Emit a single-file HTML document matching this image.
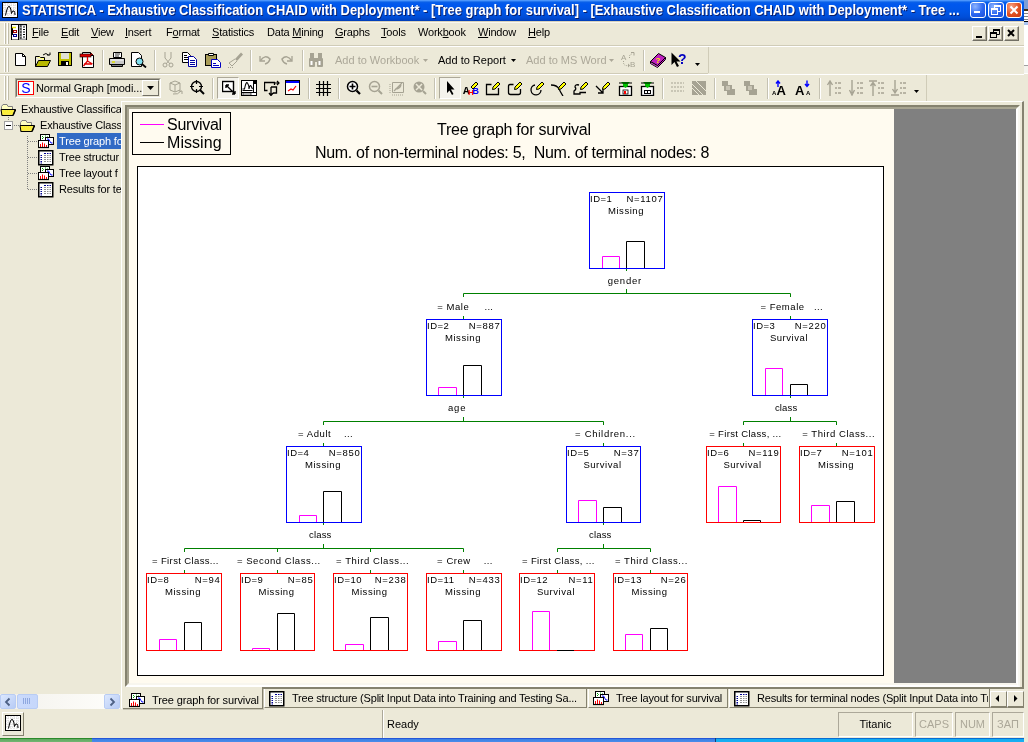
<!DOCTYPE html><html><head><meta charset="utf-8"><style>
*{margin:0;padding:0;box-sizing:border-box}
html,body{width:1028px;height:742px;overflow:hidden;background:#ECE9D8;font-family:"Liberation Sans", sans-serif;position:relative}
.a{position:absolute}
.t11{font-size:11px;line-height:13px;white-space:nowrap;color:#000}
#title{left:0;top:0;width:1024px;height:21px;background:linear-gradient(#5AA0FF 0px,#3A8AF8 1px,#0A60E8 2px,#0058EE 4px,#0055E5 12px,#004ED8 17px,#0043C4 20px,#003AB0 21px)}
#ttxt{left:22px;top:2px;font-size:14px;line-height:16px;font-weight:bold;color:#fff;text-shadow:1px 1px 0 #0A1E6A;white-space:nowrap;transform:scaleX(0.923);transform-origin:0 0}
.menu{top:26px;letter-spacing:-0.2px}
.u{text-decoration:underline}
.vsep{width:2px;border-left:1px solid #C5C2B2;border-right:1px solid #fff}
.grip{width:2px;border-left:1px solid #fff;border-right:1px solid #C1BDA9}
.gray{color:#ACA899}
.xpbtn{width:16px;height:16px;border:1px solid #fff;border-radius:3px}
.mdib{width:15px;height:15px;background:#ECE9D8;border-top:1px solid #fff;border-left:1px solid #fff;border-right:1px solid #716F64;border-bottom:1px solid #716F64;box-shadow:inset -1px -1px 0 #ACA899}
.tree{font-size:11px;line-height:13px;white-space:nowrap;letter-spacing:-0.15px}
.tab{top:689px;height:19px;border-left:1px solid #fff;border-right:1px solid #85826F;border-bottom:1px solid #85826F}
.sp{top:712px;height:25px;border-top:1px solid #ACA899;border-left:1px solid #ACA899;border-right:1px solid #fff;border-bottom:1px solid #fff}
</style></head><body><div id="root" class="a" style="left:0;top:0;width:1028px;height:742px;will-change:transform;overflow:hidden">
<div class="a" id="title"></div>
<svg class="a" style="left:2px;top:2px" width="16" height="16" viewBox="0 0 16 16"><rect x="0.5" y="0.5" width="15" height="15" fill="#fff" stroke="#000"/><path d="M3 1V15M6 1V15M9 1V15M12 1V15M1 3H15M1 6H15M1 9H15M1 12H15" stroke="#D0D0D0" stroke-width="1" stroke-dasharray="1 1"/><path d="M3.5 13.5Q5.5 3 7.5 4.5Q9 6 9.5 11.5Q10.5 8 12 9Q13 10 13 13" fill="none" stroke="#000" stroke-width="1"/></svg>
<div class="a" id="ttxt">STATISTICA - Exhaustive Classification CHAID with Deployment* - [Tree graph for survival] - [Exhaustive Classification CHAID with Deployment* - Tree ...</div>
<div class="a xpbtn" style="left:970px;top:2px;background:radial-gradient(circle at 30% 25%,#8CB4FF,#2A66F0 55%,#1E4FD8)"></div>
<div class="a" style="left:974px;top:11px;width:6px;height:2px;background:#fff"></div>
<div class="a xpbtn" style="left:988px;top:2px;background:radial-gradient(circle at 30% 25%,#8CB4FF,#2A66F0 55%,#1E4FD8)"></div>
<svg class="a" style="left:988px;top:2px" width="16" height="16"><path d="M6.5 6V3.5H12.5V9.5H10" fill="none" stroke="#fff"/><path d="M6 4H13" stroke="#fff" stroke-width="2"/><rect x="3.5" y="6.5" width="6" height="6" fill="none" stroke="#fff"/><path d="M3 7H10" stroke="#fff" stroke-width="2"/></svg>
<div class="a xpbtn" style="left:1006px;top:2px;background:radial-gradient(circle at 30% 25%,#F8A080,#E05020 55%,#C83A10)"></div>
<svg class="a" style="left:1006px;top:2px" width="16" height="16"><path d="M4.5 4.5L11.5 11.5M11.5 4.5L4.5 11.5" stroke="#fff" stroke-width="2"/></svg>
<div class="a" style="left:0;top:21px;width:1024px;height:1px;background:#D8D2BD"></div>
<div class="a" style="left:0;top:22px;width:1024px;height:1px;background:#F8F7F1"></div>
<div class="a" style="left:1024px;top:0;width:4px;height:10px;background:#7C9ED8"></div>
<div class="a" style="left:1024px;top:9px;width:4px;height:2px;background:#403010"></div>
<div class="a" style="left:1024px;top:11px;width:4px;height:10px;background:repeating-linear-gradient(#fff 0,#fff 2px,#808080 2px,#808080 3px)"></div>
<div class="a" style="left:1024px;top:21px;width:4px;height:1px;background:#000"></div>
<div class="a" style="left:1024px;top:22px;width:4px;height:3px;background:#A8C4F0"></div>
<div class="a" style="left:1024px;top:25px;width:4px;height:40px;background:#fff"></div>
<div class="a" style="left:1024px;top:65px;width:4px;height:1px;background:#A0A0A0"></div>
<div class="a" style="left:1024px;top:66px;width:4px;height:7px;background:#F4F3EE"></div>
<div class="a" style="left:1024px;top:73px;width:4px;height:1px;background:#fff"></div>
<div class="a grip" style="left:4px;top:23px;height:21px"></div><div class="a grip" style="left:7px;top:23px;height:21px"></div>
<svg class="a" style="left:11px;top:24px" width="16" height="16" viewBox="0 0 16 16"><rect x="0.5" y="0.5" width="15" height="15.5" fill="#fff" stroke="#000"/><path d="M7.5 1V16" stroke="#000"/><rect x="8" y="1" width="7" height="15" fill="#A0A0A0"/><path d="M1.5 3V11" stroke="#000"/><path d="M1 3.5H5" stroke="#E8E800" stroke-width="1.5"/><rect x="2.5" y="6.5" width="3" height="2" fill="none" stroke="#A00000"/><rect x="2.5" y="10.5" width="3" height="2" fill="none" stroke="#000090"/><path d="M9 2H10.5M9 5H10.5M9 8H10.5M9 11H10.5M9 14H10.5" stroke="#000"/><rect x="11" y="1.5" width="4" height="13" fill="#fff"/><path d="M12 3H14M12 5.5H14M12 8H14M12 10.5H14M12 13H14" stroke="#000"/></svg>
<div class="a t11 menu" style="left:32px"><span class="u">F</span>ile</div>
<div class="a t11 menu" style="left:61px"><span class="u">E</span>dit</div>
<div class="a t11 menu" style="left:91px"><span class="u">V</span>iew</div>
<div class="a t11 menu" style="left:125px"><span class="u">I</span>nsert</div>
<div class="a t11 menu" style="left:166px">F<span class="u">o</span>rmat</div>
<div class="a t11 menu" style="left:212px"><span class="u">S</span>tatistics</div>
<div class="a t11 menu" style="left:267px">Data <span class="u">M</span>ining</div>
<div class="a t11 menu" style="left:335px"><span class="u">G</span>raphs</div>
<div class="a t11 menu" style="left:381px"><span class="u">T</span>ools</div>
<div class="a t11 menu" style="left:418px">Work<span class="u">b</span>ook</div>
<div class="a t11 menu" style="left:478px"><span class="u">W</span>indow</div>
<div class="a t11 menu" style="left:528px"><span class="u">H</span>elp</div>
<div class="a mdib" style="left:972px;top:26px"></div>
<div class="a mdib" style="left:988px;top:26px"></div>
<div class="a mdib" style="left:1004px;top:26px"></div>
<div class="a" style="left:976px;top:36px;width:6px;height:2px;background:#000"></div>
<svg class="a" style="left:988px;top:26px" width="15" height="15"><path d="M5.5 6V3.5H11.5V8.5H9" fill="none" stroke="#000"/><path d="M5 4H12" stroke="#000" stroke-width="2"/><rect x="2.5" y="6.5" width="6" height="5" fill="none" stroke="#000"/><path d="M2 7H9" stroke="#000" stroke-width="2"/></svg>
<svg class="a" style="left:1004px;top:26px" width="15" height="15"><path d="M4 4L10 10M10 4L4 10" stroke="#000" stroke-width="2"/></svg>
<div class="a" style="left:0;top:45px;width:1024px;height:1px;background:#D0CCB8"></div>
<div class="a" style="left:0;top:46px;width:1024px;height:1px;background:#fff"></div>
<div class="a" style="left:0;top:73px;width:708px;height:1px;background:#D0CCB8"></div>
<div class="a" style="left:708px;top:47px;width:1px;height:26px;background:#D0CCB8"></div>
<div class="a" style="left:0;top:74px;width:1024px;height:1px;background:#fff"></div>
<div class="a grip" style="left:4px;top:48px;height:24px"></div><div class="a grip" style="left:7px;top:48px;height:24px"></div>
<svg class="a" style="left:14px;top:52px" width="16" height="16" viewBox="0 0 16 16"><path d="M1.5 1.5H8.5L11.5 4.5V13.5H1.5Z" fill="#fff" stroke="#000"/><path d="M8.5 1.5V4.5H11.5" fill="none" stroke="#000"/></svg>
<svg class="a" style="left:35px;top:52px" width="16" height="16" viewBox="0 0 16 16"><path d="M0.5 4.5H4.5L5.5 5.5H9.5V8.5" fill="#FFFF80" stroke="#000"/><path d="M0.5 4.5V14.5H12.5L15.5 8.5H3.5L0.5 14.5" fill="#B8B800" stroke="#000"/><path d="M8 3Q11 0 13.5 3" fill="none" stroke="#000"/><path d="M12 3H15V0.5" fill="none" stroke="#000"/></svg>
<svg class="a" style="left:58px;top:52px" width="16" height="16" viewBox="0 0 16 16"><rect x="0.5" y="0.5" width="13" height="13" fill="#C0C000" stroke="#000"/><rect x="3" y="1" width="8" height="6" fill="#E0E0D0"/><rect x="3" y="9" width="8" height="5" fill="#000"/><rect x="8" y="10" width="2" height="3" fill="#fff"/></svg>
<svg class="a" style="left:79px;top:52px" width="16" height="16" viewBox="0 0 16 16"><path d="M3.5 0.5H11.5L14.5 3.5V15.5H3.5Z" fill="#fff" stroke="#000"/><path d="M11.5 0.5V3.5H14.5" fill="#E00000" stroke="#000"/><rect x="1" y="2" width="11" height="3" fill="#E00000" stroke="#000" stroke-width="0.6"/><path d="M8.5 5V9M8.5 9L4.5 14M8.5 9L13.5 12M5 12H13" stroke="#E00000" stroke-width="1.3" fill="none"/></svg>
<svg class="a" style="left:109px;top:52px" width="16" height="16" viewBox="0 0 16 16"><path d="M4.5 0.5H12.5V5.5H4.5Z" fill="#fff" stroke="#000"/><path d="M6 2H11M6 4H10" stroke="#000" stroke-width="0.8"/><path d="M0.5 6.5H15.5V12.5H0.5Z" fill="#C8C8C8" stroke="#000"/><path d="M1.5 8H14.5" stroke="#fff"/><path d="M3 10H6" stroke="#E0E000" stroke-width="1.5"/><path d="M2.5 12.5H13.5V14.5H2.5Z" fill="#808080" stroke="#000"/></svg>
<svg class="a" style="left:131px;top:52px" width="16" height="16" viewBox="0 0 16 16"><path d="M0.5 0.5H7.5L10.5 3.5V14.5H0.5Z" fill="#fff" stroke="#000"/><circle cx="8.5" cy="9.5" r="3.5" fill="#80E0F0" stroke="#000"/><path d="M11 12L15 15.5" stroke="#000" stroke-width="1.8"/></svg>
<svg class="a" style="left:162px;top:52px" width="16" height="16" viewBox="0 0 16 16"><path d="M3 0V6L8 12M9 0V6L4 12" fill="none" stroke="#A6A393"/><circle cx="3" cy="13" r="2" fill="none" stroke="#A6A393"/><circle cx="9" cy="13" r="2" fill="none" stroke="#A6A393"/></svg>
<svg class="a" style="left:182px;top:52px" width="16" height="16" viewBox="0 0 16 16"><path d="M0.5 0.5H5.5L8.5 3.5V10.5H0.5Z" fill="#fff" stroke="#000"/><path d="M2 3.5H5M2 5.5H6M2 7.5H6" stroke="#000"/><path d="M6.5 4.5H11.5L14.5 7.5V14.5H6.5Z" fill="#fff" stroke="#0000A0"/><path d="M8 8.5H13M8 10.5H13M8 12.5H13" stroke="#0000A0"/></svg>
<svg class="a" style="left:205px;top:52px" width="16" height="16" viewBox="0 0 16 16"><rect x="0.5" y="2.5" width="11" height="11" fill="#A89C58" stroke="#000"/><path d="M3.5 3.5V1.5H8.5V3.5Z" fill="#fff" stroke="#000"/><path d="M6.5 7.5H12.5L15.5 10.5V15.5H6.5Z" fill="#fff" stroke="#0000C0"/><path d="M8 11.5H11M8 13.5H14" stroke="#0000C0"/></svg>
<svg class="a" style="left:227px;top:52px" width="16" height="16" viewBox="0 0 16 16"><path d="M14 0.5L16 2.5L10 9L8 7Z" fill="#A6A393"/><path d="M8 7L2 11L5 14L10 9" fill="none" stroke="#A6A393"/><path d="M1 15.5H6" stroke="#A6A393" stroke-dasharray="1 1"/></svg>
<svg class="a" style="left:257px;top:52px" width="16" height="16" viewBox="0 0 16 16"><path d="M3 4V9H8" fill="none" stroke="#A6A393" stroke-width="1.3"/><path d="M3.5 8.5Q8 2 13 7Q12 11 8 12" fill="none" stroke="#A6A393" stroke-width="1.5"/></svg>
<svg class="a" style="left:279px;top:52px" width="16" height="16" viewBox="0 0 16 16"><path d="M13 4V9H8" fill="none" stroke="#A6A393" stroke-width="1.3"/><path d="M12.5 8.5Q8 2 3 7Q4 11 8 12" fill="none" stroke="#A6A393" stroke-width="1.5"/></svg>
<svg class="a" style="left:308px;top:52px" width="16" height="16" viewBox="0 0 16 16"><rect x="1" y="6" width="6" height="9" rx="1" fill="#A6A393"/><rect x="9" y="6" width="6" height="9" rx="1" fill="#A6A393"/><rect x="2" y="1" width="4" height="6" fill="#A6A393"/><rect x="10" y="1" width="4" height="6" fill="#A6A393"/><rect x="6" y="6" width="4" height="4" fill="#A6A393"/><rect x="2.5" y="9" width="2" height="4" fill="#fff"/><rect x="10.5" y="9" width="2" height="4" fill="#fff"/></svg>
<svg class="a" style="left:620px;top:52px" width="16" height="16" viewBox="0 0 16 16"><text x="1" y="8" font-size="8" font-family="Liberation Sans" fill="#A6A393">A</text><text x="10" y="15" font-size="8" font-family="Liberation Sans" fill="#A6A393">B</text><path d="M3.5 9V11Q4 14 8 13.5" fill="none" stroke="#A6A393" stroke-dasharray="1 1"/><path d="M8 11.5L10 13.5L8 15.5Z" fill="#A6A393"/><path d="M9.5 6V4Q10 2 12 2" fill="none" stroke="#A6A393" stroke-dasharray="1 1"/><path d="M11 0.5H14V3.5" fill="none" stroke="#A6A393"/></svg>
<svg class="a" style="left:650px;top:52px" width="16" height="16" viewBox="0 0 16 16"><path d="M0.5 9.5L7.5 13.5L15.5 5.5V7.5L7.5 15.5L0.5 11.5Z" fill="#fff" stroke="#000"/><path d="M1 11L7.5 14.5L15 7" fill="none" stroke="#C020C0"/><path d="M0.5 9.5L8.5 1.5L15.5 5.5L7.5 13.5Z" fill="#C020C0" stroke="#000"/><text x="5.5" y="10.5" font-size="8" font-weight="bold" fill="#FFFF00" font-family="Liberation Sans">?</text></svg>
<svg class="a" style="left:671px;top:52px" width="16" height="16" viewBox="0 0 16 16"><path d="M0.5 0.5V13L3.5 10L6 15L8 14L5.5 9.5H9.5Z" fill="#000"/><text x="7" y="12" font-size="14" font-weight="bold" fill="#0000C0" font-family="Liberation Sans">?</text></svg>
<div class="a vsep" style="left:102px;top:50px;height:21px"></div>
<div class="a vsep" style="left:154px;top:50px;height:21px"></div>
<div class="a vsep" style="left:250px;top:50px;height:21px"></div>
<div class="a vsep" style="left:302px;top:50px;height:21px"></div>
<div class="a vsep" style="left:643px;top:50px;height:21px"></div>
<div class="a t11 gray" style="left:335px;top:54px">Add to Workbook</div>
<svg class="a" style="left:423px;top:59px" width="5" height="3"><path d="M0 0H5L2.5 3Z" fill="#ACA899"/></svg>
<div class="a t11" style="left:438px;top:54px">Add to Report</div>
<svg class="a" style="left:511px;top:59px" width="5" height="3"><path d="M0 0H5L2.5 3Z" fill="#000"/></svg>
<div class="a t11 gray" style="left:526px;top:54px">Add to MS Word</div>
<svg class="a" style="left:609px;top:59px" width="5" height="3"><path d="M0 0H5L2.5 3Z" fill="#ACA899"/></svg>
<svg class="a" style="left:695px;top:63px" width="5" height="3"><path d="M0 0H5L2.5 3Z" fill="#000"/></svg>
<div class="a" style="left:926px;top:75px;width:1px;height:26px;background:#D0CCB8"></div>
<div class="a grip" style="left:4px;top:76px;height:24px"></div><div class="a grip" style="left:7px;top:76px;height:24px"></div>
<div class="a" style="left:15px;top:78px;width:146px;height:20px;background:#fff;border:1px solid #7F9DB9;border-color:#ACA899 #fff #fff #ACA899"></div>
<div class="a" style="left:16px;top:79px;width:144px;height:18px;border:1px solid #716F64;border-right-color:#ECE9D8;border-bottom-color:#ECE9D8;background:#ECE9D8"></div>
<div class="a" style="left:18px;top:81px;width:16px;height:14px;border:1px solid #FF0000;background:#fff"></div>
<div class="a" style="left:18px;top:80px;width:16px;text-align:center;font-size:14px;line-height:16px;color:#0000FF">S</div>
<div class="a t11" style="left:36px;top:82px;letter-spacing:-0.1px">Normal Graph [modi...</div>
<div class="a" style="left:142px;top:80px;width:17px;height:16px;background:#ECE9D8;border-top:1px solid #fff;border-left:1px solid #fff;border-right:1px solid #716F64;border-bottom:1px solid #716F64"></div>
<svg class="a" style="left:147px;top:86px" width="7" height="4"><path d="M0 0H7L3.5 4Z" fill="#000"/></svg>
<div class="a" style="left:217px;top:77px;width:22px;height:22px;border-top:1px solid #ACA899;border-left:1px solid #ACA899;border-right:1px solid #fff;border-bottom:1px solid #fff;background:#F4F3EC"></div>
<div class="a" style="left:439px;top:77px;width:22px;height:22px;border-top:1px solid #ACA899;border-left:1px solid #ACA899;border-right:1px solid #fff;border-bottom:1px solid #fff;background:#F4F3EC"></div>
<svg class="a" style="left:168px;top:80px" width="16" height="16" viewBox="0 0 16 16"><path d="M2 3L7 1L12 3V10L7 12L2 10Z" fill="none" stroke="#A6A393"/><path d="M2 3L7 5L12 3M7 5V12" fill="none" stroke="#A6A393"/><path d="M5 14Q10 15 13 11" fill="none" stroke="#A6A393"/><path d="M11 11H14V14" fill="none" stroke="#A6A393"/></svg>
<svg class="a" style="left:190px;top:80px" width="16" height="16" viewBox="0 0 16 16"><circle cx="6.5" cy="6.5" r="5" fill="none" stroke="#000" stroke-width="1.3"/><path d="M6.5 0V4M6.5 9V13M0 6.5H4M9 6.5H13" stroke="#000" stroke-width="1.2"/><path d="M10 10L14 14" stroke="#000" stroke-width="2"/></svg>
<svg class="a" style="left:222px;top:80px" width="16" height="16" viewBox="0 0 16 16"><rect x="0.5" y="1.5" width="11" height="10" fill="#fff" stroke="#000" stroke-width="1.4"/><path d="M4 5L13 14M4 5H7M4 5V8M13 14H10M13 14V11" stroke="#000" stroke-width="1.4" fill="none"/></svg>
<svg class="a" style="left:241px;top:80px" width="16" height="16" viewBox="0 0 16 16"><rect x="0.5" y="0.5" width="15" height="15" fill="#fff" stroke="#000"/><path d="M12.5 1V12M1 12.5H15" stroke="#000"/><rect x="13" y="1" width="2" height="3" fill="#000"/><path d="M1.5 9L3.5 9Q5 1 6.5 3T8 9Q9 4 10 6L11.5 9" fill="none" stroke="#000" stroke-width="1.1"/><path d="M1.5 10.5H11.5" stroke="#000"/><rect x="2" y="13" width="8" height="2" fill="#fff" stroke="#000" stroke-width="0.6"/></svg>
<svg class="a" style="left:264px;top:80px" width="16" height="16" viewBox="0 0 16 16"><path d="M3.5 10.5H0.5V2.5H10.5V5" fill="none" stroke="#000" stroke-width="1.3"/><path d="M7 7V15M5 13L7 15.5L9 13M7 7H12.5V13H9" fill="none" stroke="#000" stroke-width="1.3"/><path d="M10 3H15M13 1L15 3L13 5" fill="none" stroke="#000" stroke-width="1.2"/></svg>
<svg class="a" style="left:285px;top:80px" width="16" height="16" viewBox="0 0 16 16"><rect x="0.5" y="0.5" width="14" height="14" fill="#fff" stroke="#000"/><rect x="1" y="1" width="13" height="2" fill="#0000FF"/><path d="M3 11L6 9L8 10L11 6" fill="none" stroke="#FF0000" stroke-width="1.2"/></svg>
<svg class="a" style="left:316px;top:80px" width="16" height="16" viewBox="0 0 16 16"><path d="M3.5 1V16M7.5 1V16M11.5 1V16M0 4.5H15M0 8.5H15M0 12.5H15" stroke="#000" stroke-width="1.2"/></svg>
<svg class="a" style="left:346px;top:80px" width="16" height="16" viewBox="0 0 16 16"><circle cx="6.5" cy="6.5" r="5" fill="#fff" stroke="#000" stroke-width="1.5"/><path d="M6.5 3.5V9.5M3.5 6.5H9.5" stroke="#000" stroke-width="1.6"/><path d="M10.5 10.5L14 14" stroke="#000" stroke-width="2.2"/></svg>
<svg class="a" style="left:368px;top:80px" width="16" height="16" viewBox="0 0 16 16"><circle cx="6.5" cy="6.5" r="5" fill="none" stroke="#A6A393" stroke-width="1.5"/><path d="M3.5 6.5H9.5" stroke="#A6A393" stroke-width="1.6"/><path d="M10.5 10.5L14 14" stroke="#A6A393" stroke-width="2"/></svg>
<svg class="a" style="left:389px;top:80px" width="16" height="16" viewBox="0 0 16 16"><path d="M3.5 2.5H14.5V12.5H3.5Z" fill="none" stroke="#A6A393"/><path d="M5 11L13 3M6 9Q11 9 12 5" fill="none" stroke="#A6A393" stroke-width="1.2"/><path d="M1 4V14M3 15H14" stroke="#A6A393" stroke-dasharray="1 1"/></svg>
<svg class="a" style="left:412px;top:80px" width="16" height="16" viewBox="0 0 16 16"><circle cx="7" cy="7" r="5.5" fill="#A6A393"/><path d="M4 4L10 10M10 4L4 10" stroke="#ECE9D8" stroke-width="1.5"/><path d="M11 11L14 14" stroke="#A6A393" stroke-width="2"/></svg>
<svg class="a" style="left:443px;top:80px" width="16" height="16" viewBox="0 0 16 16"><path d="M4 1V13L6.5 10.5L9 15L10.5 14L8 9.5H11.5Z" fill="#000"/></svg>
<svg class="a" style="left:463px;top:80px" width="16" height="16" viewBox="0 0 16 16"><text x="0" y="14" font-size="11" font-weight="bold" font-family="Liberation Mono" fill="#000">A</text><text x="5" y="15" font-size="8" font-weight="bold" font-family="Liberation Sans" fill="#FF0000">H</text><text x="9.5" y="14" font-size="9" font-weight="bold" font-family="Liberation Sans" fill="#0000FF">B</text><path d="M8 7L13 2L15 4L10 9Z" fill="#FFFF00" stroke="#000"/></svg>
<svg class="a" style="left:485px;top:80px" width="16" height="16" viewBox="0 0 16 16"><path d="M6.5 4.5H1.5V14.5H13.5V8" fill="none" stroke="#000" stroke-width="1.3"/><path d="M8 7L13 2L15 4L10 9L7.5 9.5Z" fill="#FFFF00" stroke="#000"/></svg>
<svg class="a" style="left:507px;top:80px" width="16" height="16" viewBox="0 0 16 16"><path d="M6.5 4.5H3Q1.5 4.5 1.5 6.5V12.5Q1.5 14.5 3.5 14.5H11.5Q13.5 14.5 13.5 12.5V9" fill="none" stroke="#000" stroke-width="1.3"/><path d="M8 7L13 2L15 4L10 9L7.5 9.5Z" fill="#FFFF00" stroke="#000"/></svg>
<svg class="a" style="left:529px;top:80px" width="16" height="16" viewBox="0 0 16 16"><path d="M6 5A5 5 0 1 0 12 10" fill="none" stroke="#000" stroke-width="1.3"/><path d="M8 7L13 2L15 4L10 9L7.5 9.5Z" fill="#FFFF00" stroke="#000"/></svg>
<svg class="a" style="left:551px;top:80px" width="16" height="16" viewBox="0 0 16 16"><path d="M0 5Q6 5 8 9T12 16" fill="none" stroke="#000" stroke-width="1.3"/><path d="M8 7L13 2L15 4L10 9L7.5 9.5Z" fill="#FFFF00" stroke="#000"/></svg>
<svg class="a" style="left:573px;top:80px" width="16" height="16" viewBox="0 0 16 16"><path d="M6 5Q2 4 2 7Q4 9 1 11V14H7V12.5H13" fill="none" stroke="#000" stroke-width="1.3"/><path d="M8 7L13 2L15 4L10 9L7.5 9.5Z" fill="#FFFF00" stroke="#000"/></svg>
<svg class="a" style="left:595px;top:80px" width="16" height="16" viewBox="0 0 16 16"><path d="M1 6L8 13M3 13H8V8" fill="none" stroke="#000" stroke-width="1.3"/><path d="M8 7L13 2L15 4L10 9L7.5 9.5Z" fill="#FFFF00" stroke="#000"/></svg>
<svg class="a" style="left:618px;top:80px" width="16" height="16" viewBox="0 0 16 16"><rect x="1.5" y="6.5" width="12" height="9" fill="#fff" stroke="#000" stroke-width="1.3"/><path d="M3 2H12L10 4V6L7.5 8L5 6V4Z" fill="#00C000"/><path d="M1 3H14" stroke="#000"/><rect x="5" y="10" width="5" height="4" fill="#fff" stroke="#000" stroke-width="0.8"/><rect x="6" y="11" width="2" height="3" fill="#FF0000"/></svg>
<svg class="a" style="left:640px;top:80px" width="16" height="16" viewBox="0 0 16 16"><rect x="1.5" y="6.5" width="12" height="9" fill="#fff" stroke="#000" stroke-width="1.3"/><path d="M3 2H12L10 4V6L7.5 8L5 6V4Z" fill="#00C000"/><path d="M1 3H14" stroke="#000"/><rect x="4" y="10" width="7" height="4" fill="#000"/><rect x="5" y="11" width="2" height="2" fill="#fff"/><rect x="8" y="11" width="2" height="2" fill="#fff"/></svg>
<svg class="a" style="left:670px;top:80px" width="16" height="16" viewBox="0 0 16 16"><path d="M1 3H14M1 7H14M1 11H14" stroke="#A6A393" stroke-dasharray="2 1"/></svg>
<svg class="a" style="left:691px;top:80px" width="16" height="16" viewBox="0 0 16 16"><rect x="1" y="1" width="14" height="14" fill="#A6A393"/><path d="M1 4L12 15M1 8L8 15M5 1L15 11" stroke="#ECE9D8" stroke-width="1"/></svg>
<svg class="a" style="left:721px;top:80px" width="16" height="16" viewBox="0 0 16 16"><path d="M1 1H7V5H11V9H14V15H6V11H3V6H1Z" fill="#A6A393"/><path d="M5 6H9V10H5Z" fill="#C8C4B4"/></svg>
<svg class="a" style="left:743px;top:80px" width="16" height="16" viewBox="0 0 16 16"><path d="M1 1H7V5H11V9H14V15H6V11H3V6H1Z" fill="#A6A393"/><path d="M5 6H9V10H5Z" fill="#C8C4B4"/></svg>
<svg class="a" style="left:772px;top:80px" width="16" height="16" viewBox="0 0 16 16"><text x="0" y="15" font-size="6" font-weight="bold" font-family="Liberation Sans" fill="#000">A</text><text x="4.5" y="15" font-size="13" font-weight="bold" font-family="Liberation Sans" fill="#000">A</text><path d="M6 1.5V7M4 3.5L6 1L8 3.5" fill="none" stroke="#0000FF" stroke-width="1.4"/></svg>
<svg class="a" style="left:795px;top:80px" width="16" height="16" viewBox="0 0 16 16"><text x="0" y="15" font-size="13" font-weight="bold" font-family="Liberation Sans" fill="#000">A</text><text x="11" y="15" font-size="6" font-weight="bold" font-family="Liberation Sans" fill="#000">A</text><path d="M12 0.5V6M10 4L12 6.5L14 4" fill="none" stroke="#0000FF" stroke-width="1.4"/></svg>
<svg class="a" style="left:826px;top:80px" width="16" height="16" viewBox="0 0 16 16"><path d="M4 16V2M1.5 5L4 1L6.5 5" fill="none" stroke="#A6A393" stroke-width="1.4"/><path d="M9 3H11M12 3H15M9 8H11M12 8H15M9 13H11M12 13H15" stroke="#A6A393" stroke-width="1.3"/></svg>
<svg class="a" style="left:848px;top:80px" width="16" height="16" viewBox="0 0 16 16"><path d="M4 0V13M1.5 10L4 15L6.5 10" fill="none" stroke="#A6A393" stroke-width="1.4"/><path d="M9 3H11M12 3H15M9 8H11M12 8H15M9 13H11M12 13H15" stroke="#A6A393" stroke-width="1.3"/></svg>
<svg class="a" style="left:869px;top:80px" width="16" height="16" viewBox="0 0 16 16"><path d="M0 1H8M4 16V3M1.5 6L4 2.5L6.5 6" fill="none" stroke="#A6A393" stroke-width="1.4"/><path d="M9 3H11M12 3H15M9 8H11M12 8H15M9 13H11M12 13H15" stroke="#A6A393" stroke-width="1.3"/></svg>
<svg class="a" style="left:891px;top:80px" width="16" height="16" viewBox="0 0 16 16"><path d="M0 15H8M4 0V12M1.5 9L4 13L6.5 9" fill="none" stroke="#A6A393" stroke-width="1.4"/><path d="M9 3H11M12 3H15M9 8H11M12 8H15M9 13H11M12 13H15" stroke="#A6A393" stroke-width="1.3"/></svg>
<div class="a vsep" style="left:212px;top:78px;height:21px"></div>
<div class="a vsep" style="left:308px;top:78px;height:21px"></div>
<div class="a vsep" style="left:338px;top:78px;height:21px"></div>
<div class="a vsep" style="left:434px;top:78px;height:21px"></div>
<div class="a vsep" style="left:662px;top:78px;height:21px"></div>
<div class="a vsep" style="left:714px;top:78px;height:21px"></div>
<div class="a vsep" style="left:767px;top:78px;height:21px"></div>
<div class="a vsep" style="left:819px;top:78px;height:21px"></div>
<svg class="a" style="left:914px;top:90px" width="5" height="3"><path d="M0 0H5L2.5 3Z" fill="#000"/></svg>
<svg class="a" style="left:0px;top:102px" width="16" height="16" viewBox="0 0 16 16"><path d="M1.5 4.5L3 2.5H7L8 4.5H12.5V13.5H1.5Z" fill="#FFFFC0" stroke="#808080"/><path d="M1 7.5H15.5L13 13.5H2Z" fill="#F8E850" stroke="#000"/><path d="M3 9H13M2.5 11H13" stroke="#FFFF00" stroke-dasharray="1 1"/><path d="M13 13.5L15.5 7.5" stroke="#000" stroke-width="1.5"/></svg>
<div class="a tree" style="left:21px;top:103px">Exhaustive Classifica</div>
<div class="a" style="left:4px;top:121px;width:9px;height:9px;border:1px solid #A0A0A0;background:#fff"></div>
<div class="a" style="left:6px;top:125px;width:5px;height:1px;background:#000"></div>
<svg class="a" style="left:19px;top:118px" width="16" height="16" viewBox="0 0 16 16"><path d="M1.5 4.5L3 2.5H7L8 4.5H12.5V13.5H1.5Z" fill="#FFFFC0" stroke="#808080"/><path d="M1 7.5H15.5L13 13.5H2Z" fill="#F8E850" stroke="#000"/><path d="M3 9H13M2.5 11H13" stroke="#FFFF00" stroke-dasharray="1 1"/><path d="M13 13.5L15.5 7.5" stroke="#000" stroke-width="1.5"/></svg>
<div class="a tree" style="left:40px;top:119px">Exhaustive Class</div>
<div class="a" style="left:57px;top:133px;width:64px;height:16px;background:#316AC5"></div>
<div class="a tree" style="left:59px;top:135px;color:#fff">Tree graph fo</div>
<div class="a tree" style="left:59px;top:151px">Tree structur</div>
<div class="a tree" style="left:59px;top:167px">Tree layout f</div>
<div class="a tree" style="left:59px;top:183px">Results for te</div>
<svg class="a" style="left:38px;top:134px" width="16" height="16" viewBox="0 0 16 16"><rect x="2.5" y="0.5" width="9" height="7" fill="#fff" stroke="#000"/><path d="M4 2L5.5 3.5L4 5" fill="none" stroke="#00A000"/><path d="M7 2H8M9 3H10" stroke="#00A000"/><rect x="7.5" y="3.5" width="8" height="7" fill="#fff" stroke="#000"/><path d="M9 5H10.5L12 7.5L13 9H14.5" fill="none" stroke="#0000FF"/><rect x="0.5" y="6.5" width="10" height="7" fill="#fff" stroke="#000"/><path d="M2.5 13V10M4.5 13V8.5M6.5 13V9.5M8.5 13V11" stroke="#FF0000"/><path d="M0 13.5H11" stroke="#000" stroke-width="1.2"/></svg>
<svg class="a" style="left:38px;top:150px" width="16" height="16" viewBox="0 0 16 16"><rect x="0.75" y="0.75" width="14" height="14" fill="#fff" stroke="#000" stroke-width="1.5"/><path d="M6 3.5H8M9 3.5H10.5M11.5 3.5H13" stroke="#000090" stroke-width="1"/><path d="M2.5 5.5H4M2.5 7.5H4M2.5 9.5H4M2.5 11.5H4M2.5 13H4" stroke="#000090" stroke-width="1"/><path d="M6 5.5H8M9 5.5H10.5M11.5 5.5H13M6 7.5H8M9 7.5H10.5M11.5 7.5H13M6 9.5H8M9 9.5H10.5M11.5 9.5H13M6 11.5H8M9 11.5H10.5M11.5 11.5H13" stroke="#909090" stroke-width="1"/></svg>
<svg class="a" style="left:38px;top:166px" width="16" height="16" viewBox="0 0 16 16"><rect x="2.5" y="0.5" width="9" height="7" fill="#fff" stroke="#000"/><path d="M4 2L5.5 3.5L4 5" fill="none" stroke="#00A000"/><path d="M7 2H8M9 3H10" stroke="#00A000"/><rect x="7.5" y="3.5" width="8" height="7" fill="#fff" stroke="#000"/><path d="M9 5H10.5L12 7.5L13 9H14.5" fill="none" stroke="#0000FF"/><rect x="0.5" y="6.5" width="10" height="7" fill="#fff" stroke="#000"/><path d="M2.5 13V10M4.5 13V8.5M6.5 13V9.5M8.5 13V11" stroke="#FF0000"/><path d="M0 13.5H11" stroke="#000" stroke-width="1.2"/></svg>
<svg class="a" style="left:38px;top:182px" width="16" height="16" viewBox="0 0 16 16"><rect x="0.75" y="0.75" width="14" height="14" fill="#fff" stroke="#000" stroke-width="1.5"/><path d="M6 3.5H8M9 3.5H10.5M11.5 3.5H13" stroke="#000090" stroke-width="1"/><path d="M2.5 5.5H4M2.5 7.5H4M2.5 9.5H4M2.5 11.5H4M2.5 13H4" stroke="#000090" stroke-width="1"/><path d="M6 5.5H8M9 5.5H10.5M11.5 5.5H13M6 7.5H8M9 7.5H10.5M11.5 7.5H13M6 9.5H8M9 9.5H10.5M11.5 9.5H13M6 11.5H8M9 11.5H10.5M11.5 11.5H13" stroke="#909090" stroke-width="1"/></svg>
<svg class="a" style="left:0;top:101px" width="60" height="100"><path d="M8.5 16V19M27.5 35V88M14 24.5H19M28 40.5H38M28 56.5H38M28 72.5H38M28 88.5H38" stroke="#808080" stroke-dasharray="1 1"/></svg>
<div class="a" style="left:121px;top:101px;width:903px;height:1px;background:#fff"></div>
<div class="a" style="left:121px;top:101px;width:903px;height:588px;border-top:1px solid #fff;border-left:1px solid #fff;border-right:2px solid #85826F;border-bottom:2px solid #85826F;background:#ECE9D8"></div>
<div class="a" style="left:125px;top:105px;width:895px;height:582px;border-top:2px solid #85826F;border-left:2px solid #85826F;border-right:2px solid #F8F7F0;border-bottom:2px solid #fff"></div>
<div class="a" style="left:127px;top:107px;width:891px;height:578px;border-top:2px solid #A8A592;border-left:2px solid #A8A592;border-right:2px solid #fff;border-bottom:2px solid #F8F6EE;background:#FFFBF0"></div>
<div class="a" style="left:894px;top:109px;width:122px;height:574px;background:#808080"></div>
<div class="a" style="left:137px;top:166px;width:747px;height:510px;border:1px solid #000;background:#fff"></div>
<div class="a" style="left:132px;top:112px;width:99px;height:43px;border:1px solid #000"></div>
<div class="a" style="left:140px;top:124px;width:24px;height:1px;background:#FF00FF"></div>
<div class="a" style="left:140px;top:142px;width:24px;height:1px;background:#000"></div>
<div class="a" style="left:167px;top:116px;font-size:16px;line-height:18px;white-space:nowrap;letter-spacing:-0.25px">Survival</div>
<div class="a" style="left:167px;top:134px;font-size:16px;line-height:18px;white-space:nowrap;letter-spacing:0.05px">Missing</div>
<div class="a" style="left:437px;top:121px;font-size:16px;line-height:18px;white-space:nowrap;letter-spacing:-0.25px">Tree graph for survival</div>
<div class="a" style="left:315px;top:144px;font-size:16px;line-height:18px;white-space:nowrap;letter-spacing:-0.31px">Num. of non-terminal nodes: 5,&nbsp; Num. of terminal nodes: 8</div>
<svg class="a" style="left:0;top:0" width="1028" height="742"><rect x="589.5" y="192.5" width="75" height="76" fill="#fff" stroke="#0000ff"/>
<path d="M602.5 268V256.5H619.5V268" fill="none" stroke="#ff00ff"/>
<path d="M626.5 268V241.5H644.5V268" fill="none" stroke="#000"/>
<text x="590" y="202" style="font-family:'Liberation Sans',sans-serif;font-size:9.5px;fill:#000;letter-spacing:0.5px">ID=1</text>
<text x="663.5" y="202" text-anchor="end" style="font-family:'Liberation Sans',sans-serif;font-size:9.5px;fill:#000;letter-spacing:0.7px">N=1107</text>
<text x="626.0" y="214" text-anchor="middle" style="font-family:'Liberation Sans',sans-serif;font-size:9.5px;fill:#000;letter-spacing:0.55px">Missing</text>
<path d="M626.5 269V271" stroke="#008000"/>
<text x="607.7" y="284" style="font-family:'Liberation Sans',sans-serif;font-size:9.5px;fill:#000;letter-spacing:0.8px">gender</text>
<path d="M626.5 289V293" stroke="#008000"/>
<path d="M463.5 297V293.5H790.5V297" fill="none" stroke="#008000"/>
<rect x="426.5" y="319.5" width="75" height="76" fill="#fff" stroke="#0000ff"/>
<path d="M438.5 395V387.5H456.5V395" fill="none" stroke="#ff00ff"/>
<path d="M463.5 395V365.5H481.5V395" fill="none" stroke="#000"/>
<text x="427" y="329" style="font-family:'Liberation Sans',sans-serif;font-size:9.5px;fill:#000;letter-spacing:0.5px">ID=2</text>
<text x="500.5" y="329" text-anchor="end" style="font-family:'Liberation Sans',sans-serif;font-size:9.5px;fill:#000;letter-spacing:0.7px">N=887</text>
<text x="463.0" y="341" text-anchor="middle" style="font-family:'Liberation Sans',sans-serif;font-size:9.5px;fill:#000;letter-spacing:0.55px">Missing</text>
<path d="M463.5 316V319" stroke="#008000"/>
<text x="437.2" y="310" style="font-family:'Liberation Sans',sans-serif;font-size:9.5px;fill:#000;letter-spacing:0.55px">= Male</text>
<text x="493.3" y="310" text-anchor="end" style="font-family:'Liberation Sans',sans-serif;font-size:9.5px;fill:#000;letter-spacing:0.3px">...</text>
<path d="M463.5 396V398" stroke="#008000"/>
<text x="447.9" y="411" style="font-family:'Liberation Sans',sans-serif;font-size:9.5px;fill:#000;letter-spacing:0.9px">age</text>
<path d="M463.5 417V421" stroke="#008000"/>
<path d="M323.5 425V421.5H603.5V425" fill="none" stroke="#008000"/>
<rect x="752.5" y="319.5" width="75" height="76" fill="#fff" stroke="#0000ff"/>
<path d="M765.5 395V368.5H782.5V395" fill="none" stroke="#ff00ff"/>
<path d="M790.5 395V384.5H807.5V395" fill="none" stroke="#000"/>
<text x="753" y="329" style="font-family:'Liberation Sans',sans-serif;font-size:9.5px;fill:#000;letter-spacing:0.5px">ID=3</text>
<text x="826.5" y="329" text-anchor="end" style="font-family:'Liberation Sans',sans-serif;font-size:9.5px;fill:#000;letter-spacing:0.7px">N=220</text>
<text x="789.0" y="341" text-anchor="middle" style="font-family:'Liberation Sans',sans-serif;font-size:9.5px;fill:#000;letter-spacing:0.55px">Survival</text>
<path d="M790.5 316V319" stroke="#008000"/>
<text x="760.4" y="310" style="font-family:'Liberation Sans',sans-serif;font-size:9.5px;fill:#000;letter-spacing:0.55px">= Female</text>
<text x="822.9" y="310" text-anchor="end" style="font-family:'Liberation Sans',sans-serif;font-size:9.5px;fill:#000;letter-spacing:0.3px">...</text>
<path d="M790.5 396V398" stroke="#008000"/>
<text x="774.9" y="411" style="font-family:'Liberation Sans',sans-serif;font-size:9.5px;fill:#000;letter-spacing:0.15px">class</text>
<path d="M790.5 417V421" stroke="#008000"/>
<path d="M743.5 425V421.5H836.5V425" fill="none" stroke="#008000"/>
<rect x="286.5" y="446.5" width="75" height="76" fill="#fff" stroke="#0000ff"/>
<path d="M299.5 522V515.5H316.5V522" fill="none" stroke="#ff00ff"/>
<path d="M323.5 522V491.5H341.5V522" fill="none" stroke="#000"/>
<text x="287" y="456" style="font-family:'Liberation Sans',sans-serif;font-size:9.5px;fill:#000;letter-spacing:0.5px">ID=4</text>
<text x="360.5" y="456" text-anchor="end" style="font-family:'Liberation Sans',sans-serif;font-size:9.5px;fill:#000;letter-spacing:0.7px">N=850</text>
<text x="323.0" y="468" text-anchor="middle" style="font-family:'Liberation Sans',sans-serif;font-size:9.5px;fill:#000;letter-spacing:0.55px">Missing</text>
<path d="M323.5 443V446" stroke="#008000"/>
<text x="298.09999999999997" y="437" style="font-family:'Liberation Sans',sans-serif;font-size:9.5px;fill:#000;letter-spacing:0.55px">= Adult</text>
<text x="352.90000000000003" y="437" text-anchor="end" style="font-family:'Liberation Sans',sans-serif;font-size:9.5px;fill:#000;letter-spacing:0.3px">...</text>
<path d="M323.5 523V525" stroke="#008000"/>
<text x="309.1" y="538" style="font-family:'Liberation Sans',sans-serif;font-size:9.5px;fill:#000;letter-spacing:0.15px">class</text>
<path d="M323.5 544V548" stroke="#008000"/>
<path d="M184.5 552V548.5H463.5V552" fill="none" stroke="#008000"/>
<path d="M277.5 548V552" stroke="#008000"/>
<path d="M370.5 548V552" stroke="#008000"/>
<rect x="566.5" y="446.5" width="74" height="76" fill="#fff" stroke="#0000ff"/>
<path d="M578.5 522V500.5H596.5V522" fill="none" stroke="#ff00ff"/>
<path d="M603.5 522V507.5H621.5V522" fill="none" stroke="#000"/>
<text x="567" y="456" style="font-family:'Liberation Sans',sans-serif;font-size:9.5px;fill:#000;letter-spacing:0.5px">ID=5</text>
<text x="639.5" y="456" text-anchor="end" style="font-family:'Liberation Sans',sans-serif;font-size:9.5px;fill:#000;letter-spacing:0.7px">N=37</text>
<text x="602.5" y="468" text-anchor="middle" style="font-family:'Liberation Sans',sans-serif;font-size:9.5px;fill:#000;letter-spacing:0.55px">Survival</text>
<path d="M603.5 443V446" stroke="#008000"/>
<text x="575.0" y="437" textLength="60.2" lengthAdjust="spacing" style="font-family:'Liberation Sans',sans-serif;font-size:9.5px;fill:#000">= Children...</text>
<path d="M603.5 523V525" stroke="#008000"/>
<text x="589.1" y="538" style="font-family:'Liberation Sans',sans-serif;font-size:9.5px;fill:#000;letter-spacing:0.15px">class</text>
<path d="M603.5 544V548" stroke="#008000"/>
<path d="M557.5 552V548.5H650.5V552" fill="none" stroke="#008000"/>
<rect x="706.5" y="446.5" width="74" height="76" fill="#fff" stroke="#ff0000"/>
<path d="M718.5 522V486.5H736.5V522" fill="none" stroke="#ff00ff"/>
<path d="M743.5 522V520.5H760.5V522" fill="none" stroke="#000"/>
<text x="707" y="456" style="font-family:'Liberation Sans',sans-serif;font-size:9.5px;fill:#000;letter-spacing:0.5px">ID=6</text>
<text x="779.5" y="456" text-anchor="end" style="font-family:'Liberation Sans',sans-serif;font-size:9.5px;fill:#000;letter-spacing:0.7px">N=119</text>
<text x="742.5" y="468" text-anchor="middle" style="font-family:'Liberation Sans',sans-serif;font-size:9.5px;fill:#000;letter-spacing:0.55px">Survival</text>
<path d="M743.5 443V446" stroke="#008000"/>
<text x="709.1999999999999" y="437" textLength="72.0" lengthAdjust="spacing" style="font-family:'Liberation Sans',sans-serif;font-size:9.5px;fill:#000">= First Class, ...</text>
<rect x="799.5" y="446.5" width="75" height="76" fill="#fff" stroke="#ff0000"/>
<path d="M811.5 522V505.5H829.5V522" fill="none" stroke="#ff00ff"/>
<path d="M836.5 522V501.5H854.5V522" fill="none" stroke="#000"/>
<text x="800" y="456" style="font-family:'Liberation Sans',sans-serif;font-size:9.5px;fill:#000;letter-spacing:0.5px">ID=7</text>
<text x="873.5" y="456" text-anchor="end" style="font-family:'Liberation Sans',sans-serif;font-size:9.5px;fill:#000;letter-spacing:0.7px">N=101</text>
<text x="836.0" y="468" text-anchor="middle" style="font-family:'Liberation Sans',sans-serif;font-size:9.5px;fill:#000;letter-spacing:0.55px">Missing</text>
<path d="M836.5 443V446" stroke="#008000"/>
<text x="802.1999999999999" y="437" textLength="72.4" lengthAdjust="spacing" style="font-family:'Liberation Sans',sans-serif;font-size:9.5px;fill:#000">= Third Class...</text>
<rect x="146.5" y="573.5" width="75" height="77" fill="#fff" stroke="#ff0000"/>
<path d="M159.5 650V639.5H176.5V650" fill="none" stroke="#ff00ff"/>
<path d="M184.5 650V622.5H201.5V650" fill="none" stroke="#000"/>
<text x="147" y="583" style="font-family:'Liberation Sans',sans-serif;font-size:9.5px;fill:#000;letter-spacing:0.5px">ID=8</text>
<text x="220.5" y="583" text-anchor="end" style="font-family:'Liberation Sans',sans-serif;font-size:9.5px;fill:#000;letter-spacing:0.7px">N=94</text>
<text x="183.0" y="595" text-anchor="middle" style="font-family:'Liberation Sans',sans-serif;font-size:9.5px;fill:#000;letter-spacing:0.55px">Missing</text>
<path d="M184.5 570V573" stroke="#008000"/>
<text x="152.0" y="564" textLength="66.5" lengthAdjust="spacing" style="font-family:'Liberation Sans',sans-serif;font-size:9.5px;fill:#000">= First Class...</text>
<rect x="240.5" y="573.5" width="74" height="77" fill="#fff" stroke="#ff0000"/>
<path d="M252.5 650V648.5H269.5V650" fill="none" stroke="#ff00ff"/>
<path d="M277.5 650V613.5H294.5V650" fill="none" stroke="#000"/>
<text x="241" y="583" style="font-family:'Liberation Sans',sans-serif;font-size:9.5px;fill:#000;letter-spacing:0.5px">ID=9</text>
<text x="313.5" y="583" text-anchor="end" style="font-family:'Liberation Sans',sans-serif;font-size:9.5px;fill:#000;letter-spacing:0.7px">N=85</text>
<text x="276.5" y="595" text-anchor="middle" style="font-family:'Liberation Sans',sans-serif;font-size:9.5px;fill:#000;letter-spacing:0.55px">Missing</text>
<path d="M277.5 570V573" stroke="#008000"/>
<text x="237.0" y="564" textLength="83.2" lengthAdjust="spacing" style="font-family:'Liberation Sans',sans-serif;font-size:9.5px;fill:#000">= Second Class...</text>
<rect x="333.5" y="573.5" width="74" height="77" fill="#fff" stroke="#ff0000"/>
<path d="M345.5 650V644.5H363.5V650" fill="none" stroke="#ff00ff"/>
<path d="M370.5 650V617.5H388.5V650" fill="none" stroke="#000"/>
<text x="334" y="583" style="font-family:'Liberation Sans',sans-serif;font-size:9.5px;fill:#000;letter-spacing:0.5px">ID=10</text>
<text x="406.5" y="583" text-anchor="end" style="font-family:'Liberation Sans',sans-serif;font-size:9.5px;fill:#000;letter-spacing:0.7px">N=238</text>
<text x="369.5" y="595" text-anchor="middle" style="font-family:'Liberation Sans',sans-serif;font-size:9.5px;fill:#000;letter-spacing:0.55px">Missing</text>
<path d="M370.5 570V573" stroke="#008000"/>
<text x="336.0" y="564" textLength="72.7" lengthAdjust="spacing" style="font-family:'Liberation Sans',sans-serif;font-size:9.5px;fill:#000">= Third Class...</text>
<rect x="426.5" y="573.5" width="75" height="77" fill="#fff" stroke="#ff0000"/>
<path d="M438.5 650V641.5H456.5V650" fill="none" stroke="#ff00ff"/>
<path d="M463.5 650V620.5H481.5V650" fill="none" stroke="#000"/>
<text x="427" y="583" style="font-family:'Liberation Sans',sans-serif;font-size:9.5px;fill:#000;letter-spacing:0.5px">ID=11</text>
<text x="500.5" y="583" text-anchor="end" style="font-family:'Liberation Sans',sans-serif;font-size:9.5px;fill:#000;letter-spacing:0.7px">N=433</text>
<text x="463.0" y="595" text-anchor="middle" style="font-family:'Liberation Sans',sans-serif;font-size:9.5px;fill:#000;letter-spacing:0.55px">Missing</text>
<path d="M463.5 570V573" stroke="#008000"/>
<text x="437.09999999999997" y="564" style="font-family:'Liberation Sans',sans-serif;font-size:9.5px;fill:#000;letter-spacing:0.55px">= Crew</text>
<text x="492.7" y="564" text-anchor="end" style="font-family:'Liberation Sans',sans-serif;font-size:9.5px;fill:#000;letter-spacing:0.3px">...</text>
<rect x="519.5" y="573.5" width="75" height="77" fill="#fff" stroke="#ff0000"/>
<path d="M532.5 650V611.5H549.5V650" fill="none" stroke="#ff00ff"/>
<path d="M557 650.5H574" fill="none" stroke="#000"/>
<text x="520" y="583" style="font-family:'Liberation Sans',sans-serif;font-size:9.5px;fill:#000;letter-spacing:0.5px">ID=12</text>
<text x="593.5" y="583" text-anchor="end" style="font-family:'Liberation Sans',sans-serif;font-size:9.5px;fill:#000;letter-spacing:0.7px">N=11</text>
<text x="556.0" y="595" text-anchor="middle" style="font-family:'Liberation Sans',sans-serif;font-size:9.5px;fill:#000;letter-spacing:0.55px">Survival</text>
<path d="M557.5 570V573" stroke="#008000"/>
<text x="522.0" y="564" textLength="72.4" lengthAdjust="spacing" style="font-family:'Liberation Sans',sans-serif;font-size:9.5px;fill:#000">= First Class, ...</text>
<rect x="613.5" y="573.5" width="74" height="77" fill="#fff" stroke="#ff0000"/>
<path d="M625.5 650V634.5H642.5V650" fill="none" stroke="#ff00ff"/>
<path d="M650.5 650V628.5H667.5V650" fill="none" stroke="#000"/>
<text x="614" y="583" style="font-family:'Liberation Sans',sans-serif;font-size:9.5px;fill:#000;letter-spacing:0.5px">ID=13</text>
<text x="686.5" y="583" text-anchor="end" style="font-family:'Liberation Sans',sans-serif;font-size:9.5px;fill:#000;letter-spacing:0.7px">N=26</text>
<text x="649.5" y="595" text-anchor="middle" style="font-family:'Liberation Sans',sans-serif;font-size:9.5px;fill:#000;letter-spacing:0.55px">Missing</text>
<path d="M650.5 570V573" stroke="#008000"/>
<text x="614.9" y="564" textLength="72.5" lengthAdjust="spacing" style="font-family:'Liberation Sans',sans-serif;font-size:9.5px;fill:#000">= Third Class...</text></svg>
<div class="a" style="left:0;top:694px;width:120px;height:15px;background:linear-gradient(90deg,#F3F1EC,#FEFEFB)"></div>
<div class="a" style="left:0px;top:694px;width:16px;height:15px;border:1px solid #B8CCF4;border-radius:2px;background:linear-gradient(135deg,#DCE8FE,#B7CBF5)"></div>
<div class="a" style="left:104px;top:694px;width:16px;height:15px;border:1px solid #B8CCF4;border-radius:2px;background:linear-gradient(135deg,#DCE8FE,#B7CBF5)"></div>
<svg class="a" style="left:0;top:694px" width="16" height="16"><path d="M9.5 4.5L6 8L9.5 11.5" fill="none" stroke="#4D6185" stroke-width="1.8"/></svg>
<svg class="a" style="left:104px;top:694px" width="16" height="16"><path d="M6.5 4.5L10 8L6.5 11.5" fill="none" stroke="#4D6185" stroke-width="1.8"/></svg>
<div class="a" style="left:17px;top:694px;width:21px;height:15px;border:1px solid #B8CCF4;border-radius:2px;background:linear-gradient(90deg,#CADAFC,#C6D7FB)"></div>
<svg class="a" style="left:23px;top:698px" width="9" height="6"><path d="M0.5 0V6M2.5 0V6M4.5 0V6M6.5 0V6" stroke="#8FA8DF"/></svg>
<div class="a" style="left:122px;top:687px;width:141px;height:2px;background:#ECE9D8"></div>
<div class="a" style="left:121px;top:687px;width:1px;height:22px;background:#fff"></div>
<div class="a" style="left:123px;top:708px;width:141px;height:1px;background:#85826F"></div>
<div class="a" style="left:123px;top:709px;width:141px;height:1px;background:#C8C5B4"></div>
<div class="a" style="left:262px;top:687px;width:1px;height:22px;background:#85826F"></div>
<div class="a" style="left:263px;top:689px;width:1px;height:20px;background:#C8C5B4"></div>
<svg class="a" style="left:129px;top:693px" width="16" height="16" viewBox="0 0 16 16"><rect x="2.5" y="0.5" width="9" height="7" fill="#fff" stroke="#000"/><path d="M4 2L5.5 3.5L4 5" fill="none" stroke="#00A000"/><path d="M7 2H8M9 3H10" stroke="#00A000"/><rect x="7.5" y="3.5" width="8" height="7" fill="#fff" stroke="#000"/><path d="M9 5H10.5L12 7.5L13 9H14.5" fill="none" stroke="#0000FF"/><rect x="0.5" y="6.5" width="10" height="7" fill="#fff" stroke="#000"/><path d="M2.5 13V10M4.5 13V8.5M6.5 13V9.5M8.5 13V11" stroke="#FF0000"/><path d="M0 13.5H11" stroke="#000" stroke-width="1.2"/></svg>
<div class="a t11" style="left:152px;top:694px;letter-spacing:-0.12px">Tree graph for survival</div>
<div class="a tab" style="left:264px;width:323px;background:#ECE9D8"></div>
<svg class="a" style="left:269px;top:691px" width="16" height="16" viewBox="0 0 16 16"><rect x="0.75" y="0.75" width="14" height="14" fill="#fff" stroke="#000" stroke-width="1.5"/><path d="M6 3.5H8M9 3.5H10.5M11.5 3.5H13" stroke="#000090" stroke-width="1"/><path d="M2.5 5.5H4M2.5 7.5H4M2.5 9.5H4M2.5 11.5H4M2.5 13H4" stroke="#000090" stroke-width="1"/><path d="M6 5.5H8M9 5.5H10.5M11.5 5.5H13M6 7.5H8M9 7.5H10.5M11.5 7.5H13M6 9.5H8M9 9.5H10.5M11.5 9.5H13M6 11.5H8M9 11.5H10.5M11.5 11.5H13" stroke="#909090" stroke-width="1"/></svg>
<div class="a t11" style="left:292px;top:692px;width:293px;overflow:hidden;letter-spacing:-0.2px">Tree structure (Split Input Data into Training and Testing Sa...</div>
<div class="a tab" style="left:588px;width:140px;background:#ECE9D8"></div>
<svg class="a" style="left:593px;top:691px" width="16" height="16" viewBox="0 0 16 16"><rect x="2.5" y="0.5" width="9" height="7" fill="#fff" stroke="#000"/><path d="M4 2L5.5 3.5L4 5" fill="none" stroke="#00A000"/><path d="M7 2H8M9 3H10" stroke="#00A000"/><rect x="7.5" y="3.5" width="8" height="7" fill="#fff" stroke="#000"/><path d="M9 5H10.5L12 7.5L13 9H14.5" fill="none" stroke="#0000FF"/><rect x="0.5" y="6.5" width="10" height="7" fill="#fff" stroke="#000"/><path d="M2.5 13V10M4.5 13V8.5M6.5 13V9.5M8.5 13V11" stroke="#FF0000"/><path d="M0 13.5H11" stroke="#000" stroke-width="1.2"/></svg>
<div class="a t11" style="left:616px;top:692px;width:110px;overflow:hidden;letter-spacing:-0.2px">Tree layout for survival</div>
<div class="a tab" style="left:729px;width:261px;background:#ECE9D8"></div>
<svg class="a" style="left:734px;top:691px" width="16" height="16" viewBox="0 0 16 16"><rect x="0.75" y="0.75" width="14" height="14" fill="#fff" stroke="#000" stroke-width="1.5"/><path d="M6 3.5H8M9 3.5H10.5M11.5 3.5H13" stroke="#000090" stroke-width="1"/><path d="M2.5 5.5H4M2.5 7.5H4M2.5 9.5H4M2.5 11.5H4M2.5 13H4" stroke="#000090" stroke-width="1"/><path d="M6 5.5H8M9 5.5H10.5M11.5 5.5H13M6 7.5H8M9 7.5H10.5M11.5 7.5H13M6 9.5H8M9 9.5H10.5M11.5 9.5H13M6 11.5H8M9 11.5H10.5M11.5 11.5H13" stroke="#909090" stroke-width="1"/></svg>
<div class="a t11" style="left:757px;top:692px;width:231px;overflow:hidden;letter-spacing:-0.2px">Results for terminal nodes (Split Input Data into Tr</div>
<div class="a" style="left:990px;top:691px;width:17px;height:17px;border-left:1px solid #fff;border-top:1px solid #fff;border-right:1px solid #85826F;border-bottom:2px solid #85826F;background:#ECE9D8"></div>
<svg class="a" style="left:990px;top:691px" width="16" height="16"><path d="M9 4V11L5.5 7.5Z" fill="#000"/></svg>
<div class="a" style="left:1007px;top:691px;width:17px;height:17px;border-left:1px solid #fff;border-top:1px solid #fff;border-right:1px solid #85826F;border-bottom:2px solid #85826F;background:#ECE9D8"></div>
<svg class="a" style="left:1007px;top:691px" width="16" height="16"><path d="M7 4V11L10.5 7.5Z" fill="#000"/></svg>
<div class="a" style="left:2px;top:712px;width:22px;height:24px;border:1px solid #fff;border-right-color:#85826F;border-bottom-color:#85826F"></div>
<svg class="a" style="left:5px;top:715px" width="16" height="16" viewBox="0 0 16 16"><rect x="0.5" y="0.5" width="15" height="15" fill="#fff" stroke="#000"/><path d="M3 1V15M6 1V15M9 1V15M12 1V15M1 3H15M1 6H15M1 9H15M1 12H15" stroke="#D0D0D0" stroke-width="1" stroke-dasharray="1 1"/><path d="M3.5 13.5Q5.5 3 7.5 4.5Q9 6 9.5 11.5Q10.5 8 12 9Q13 10 13 13" fill="none" stroke="#000" stroke-width="1"/></svg>
<div class="a" style="left:382px;top:710px;width:1px;height:28px;background:#ACA899"></div>
<div class="a" style="left:383px;top:710px;width:1px;height:28px;background:#fff"></div>
<div class="a t11" style="left:387px;top:718px">Ready</div>
<div class="a sp t11" style="left:838px;width:75px;text-align:center;line-height:23px;color:#000">Titanic</div>
<div class="a sp t11" style="left:915px;width:38px;text-align:center;line-height:23px;color:#ACA899">CAPS</div>
<div class="a sp t11" style="left:955px;width:35px;text-align:center;line-height:23px;color:#ACA899">NUM</div>
<div class="a sp t11" style="left:992px;width:32px;text-align:center;line-height:23px;color:#ACA899">ЗАП</div>
<div class="a" style="left:0;top:738px;width:1024px;height:4px;background:linear-gradient(#2456D8 0,#2456D8 1px,#3B7FE4 1px,#4A8CEA 4px)"></div>
<div class="a" style="left:0;top:738px;width:92px;height:4px;background:linear-gradient(#2B8A2B 0,#2B8A2B 1px,#5FA85F 1px,#72B672 4px)"></div>
<div class="a" style="left:715px;top:738px;width:1px;height:4px;background:#1A3A70"></div>
<div class="a" style="left:716px;top:738px;width:308px;height:4px;background:linear-gradient(#0A6CD0 0,#0A6CD0 1px,#14AAF0 1px,#18B0F2 4px)"></div>
</div></body></html>
